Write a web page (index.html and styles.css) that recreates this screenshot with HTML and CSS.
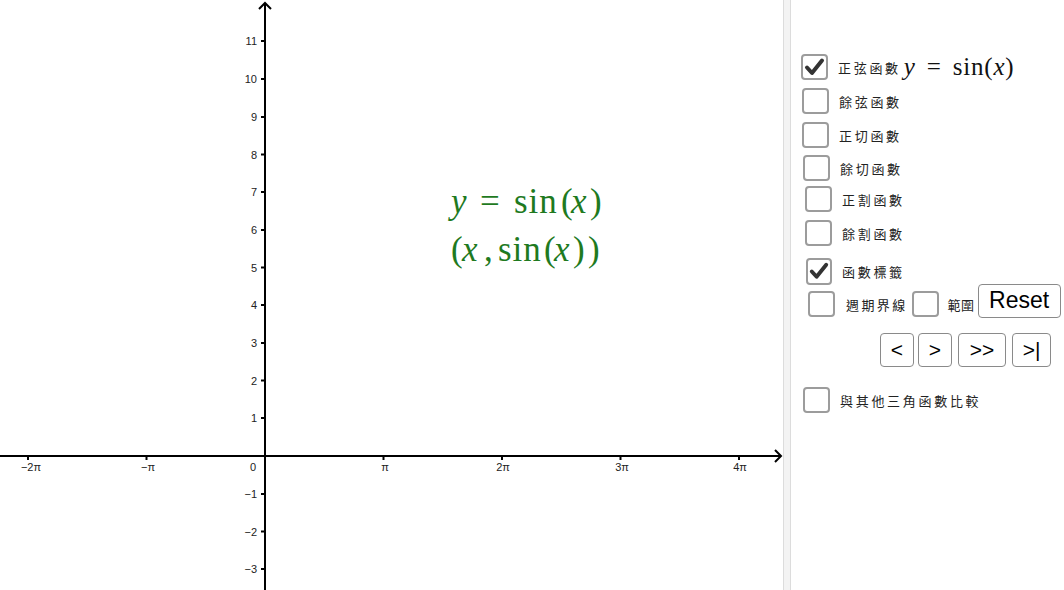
FILE: index.html
```html
<!DOCTYPE html>
<html lang="zh-Hant">
<head>
<meta charset="utf-8">
<title>三角函數</title>
<link rel="stylesheet" href="styles.css">
</head>
<body>
<div class="app">
  <div class="graphics">
    <svg class="plot" width="783" height="590" viewBox="0 0 783 590" xmlns="http://www.w3.org/2000/svg">
      <g class="axes" stroke="#000" stroke-width="2" fill="none">
        <line x1="0" y1="456" x2="780" y2="456"/>
        <polyline points="775,450 781,456 775,462"/>
        <line x1="265" y1="590" x2="265" y2="3"/>
        <polyline points="259,9 265,3 271,9"/>
      </g>
      <g class="ticks" stroke="#000" stroke-width="2">
        <line x1="28" y1="456" x2="28" y2="460"/>
        <line x1="146.5" y1="456" x2="146.5" y2="460"/>
        <line x1="383.5" y1="456" x2="383.5" y2="460"/>
        <line x1="502" y1="456" x2="502" y2="460"/>
        <line x1="620.5" y1="456" x2="620.5" y2="460"/>
        <line x1="739" y1="456" x2="739" y2="460"/>
        <line x1="261" y1="41" x2="265" y2="41"/>
        <line x1="261" y1="79" x2="265" y2="79"/>
        <line x1="261" y1="117" x2="265" y2="117"/>
        <line x1="261" y1="154.5" x2="265" y2="154.5"/>
        <line x1="261" y1="192" x2="265" y2="192"/>
        <line x1="261" y1="230" x2="265" y2="230"/>
        <line x1="261" y1="267.5" x2="265" y2="267.5"/>
        <line x1="261" y1="305" x2="265" y2="305"/>
        <line x1="261" y1="343" x2="265" y2="343"/>
        <line x1="261" y1="380.5" x2="265" y2="380.5"/>
        <line x1="261" y1="418" x2="265" y2="418"/>
        <line x1="261" y1="494" x2="265" y2="494"/>
        <line x1="261" y1="531.5" x2="265" y2="531.5"/>
        <line x1="261" y1="569" x2="265" y2="569"/>
      </g>
      <g class="tick-labels xl" text-anchor="middle">
        <text x="31" y="471">−2π</text>
        <text x="148" y="471">−π</text>
        <text x="253" y="471">0</text>
        <text x="385" y="471">π</text>
        <text x="503" y="471">2π</text>
        <text x="622" y="471">3π</text>
        <text x="740" y="471">4π</text>
      </g>
      <g class="tick-labels yl" text-anchor="end">
        <text x="257" y="45">11</text>
        <text x="257" y="83">10</text>
        <text x="257" y="121">9</text>
        <text x="257" y="158.5">8</text>
        <text x="257" y="196">7</text>
        <text x="257" y="234">6</text>
        <text x="257" y="271.5">5</text>
        <text x="257" y="309">4</text>
        <text x="257" y="347">3</text>
        <text x="257" y="384.5">2</text>
        <text x="257" y="422">1</text>
        <text x="257" y="498">−1</text>
        <text x="257" y="535.5">−2</text>
        <text x="257" y="573">−3</text>
      </g>
      <g class="math-label">
        <text y="213"><tspan class="it" x="451">y</tspan><tspan x="480">=</tspan><tspan x="514" class="fn">sin</tspan><tspan x="561">(</tspan><tspan class="it" x="571">x</tspan><tspan x="590">)</tspan></text>
        <text y="261"><tspan x="451">(</tspan><tspan class="it" x="462">x</tspan><tspan x="484">,</tspan><tspan x="498" class="fn">sin</tspan><tspan x="544">(</tspan><tspan class="it" x="554">x</tspan><tspan x="573">)</tspan><tspan x="588">)</tspan></text>
      </g>
    </svg>
  </div>
  <div class="divider"></div>
  <div class="panel">
    <div class="row r1">
      <span class="cb checked"><svg viewBox="0 0 27 26" width="27" height="26"><path d="M6 13.5 L11 19 L21 6.5" fill="none" stroke="#333" stroke-width="4" stroke-linecap="round" stroke-linejoin="round"/></svg></span>
      <span class="lbl">正弦函數</span>
      <span class="pmath"><i>y</i> = sin(<i>x</i>)</span>
    </div>
    <div class="row r2"><span class="cb"></span><span class="lbl">餘弦函數</span></div>
    <div class="row r3"><span class="cb"></span><span class="lbl">正切函數</span></div>
    <div class="row r4"><span class="cb"></span><span class="lbl">餘切函數</span></div>
    <div class="row r5"><span class="cb"></span><span class="lbl">正割函數</span></div>
    <div class="row r6"><span class="cb"></span><span class="lbl">餘割函數</span></div>
    <div class="row r7">
      <span class="cb checked"><svg viewBox="0 0 27 26" width="26" height="26"><path d="M6 13.5 L11 19 L21 6.5" fill="none" stroke="#333" stroke-width="4" stroke-linecap="round" stroke-linejoin="round"/></svg></span>
      <span class="lbl">函數標籤</span>
    </div>
    <div class="row r8">
      <span class="cb"></span><span class="lbl">週期界線</span>
      <span class="cb cb-inline"></span><span class="lbl lbl-short">範圍</span>
      <button class="btn reset">Reset</button>
    </div>
    <div class="btnrow">
      <button class="btn nav">&lt;</button>
      <button class="btn nav">&gt;</button>
      <button class="btn nav wide">&gt;&gt;</button>
      <button class="btn nav mid">&gt;|</button>
    </div>
    <div class="row r10"><span class="cb"></span><span class="lbl">與其他三角函數比較</span></div>
  </div>
</div>
</body>
</html>
```

FILE: styles.css
```css
html, body {
  margin: 0;
  padding: 0;
  background: #fff;
  overflow: hidden;
}
.app {
  display: flex;
  width: 1064px;
  height: 590px;
}
.graphics {
  width: 783px;
  height: 590px;
  flex: none;
}
.plot {
  display: block;
}
.tick-labels {
  font-family: "Liberation Sans", Arial, sans-serif;
  font-size: 11px;
  fill: #222;
}
.math-label {
  font-family: "Liberation Serif", "DejaVu Serif", serif;
  font-size: 35px;
  fill: #1f7a1f;
}
.math-label .it {
  font-style: italic;
}
.math-label .fn {
  letter-spacing: 1px;
}
.divider {
  flex: none;
  width: 6px;
  background: #f3f3f3;
  border-left: 1px solid #dcdcdc;
  border-right: 1px solid #dcdcdc;
}
.panel {
  flex: 1;
  display: flex;
  flex-direction: column;
  padding-top: 54px;
}
.row {
  display: flex;
  align-items: center;
  height: 26px;
}
.cb {
  flex: none;
  box-sizing: border-box;
  width: 27px;
  height: 26px;
  border: 2px solid #9c9c9c;
  border-radius: 4px;
  background: #fff;
  display: flex;
  align-items: center;
  justify-content: center;
  position: relative;
}
.cb svg {
  position: absolute;
  left: -2px;
  top: -2px;
}
.lbl {
  margin-left: 10px;
  font-family: "Noto Sans CJK TC", "Noto Sans CJK SC", sans-serif;
  font-size: 13px;
  letter-spacing: 2.7px;
  color: #222;
}
.pmath {
  margin-left: 3px;
  font-family: "Liberation Serif", "DejaVu Serif", serif;
  font-size: 25px;
  color: #111;
  word-spacing: 4px;
  letter-spacing: 0.8px;
}
.r1 { margin-left: 10px; }
.r2 { margin-left: 11px; margin-top: 8px; }
.r3 { margin-left: 11px; margin-top: 8px; }
.r4 { margin-left: 12px; margin-top: 7px; }
.r5 { margin-left: 14px; margin-top: 5px; }
.r6 { margin-left: 14px; margin-top: 8px; }
.r7 { margin-left: 15px; margin-top: 12px; }
.r7 .cb { width: 26px; height: 27px; }
.r8 { margin-left: 17px; margin-top: 7px; }
.r8 .lbl { margin-left: 11px; letter-spacing: 2.4px; }
.r8 .cb-inline { margin-left: 4px; }
.r8 .lbl-short { margin-left: 9px; letter-spacing: 0.5px; }
.btn {
  box-sizing: border-box;
  background: #fff;
  border: 1.5px solid #8a8a8a;
  border-radius: 4px;
  font-family: "Liberation Sans", Arial, sans-serif;
  color: #000;
  padding: 0;
  cursor: pointer;
}
.reset {
  width: 83px;
  height: 34px;
  margin-left: 3px;
  margin-top: -7px;
  font-size: 23px;
}
.btnrow {
  display: flex;
  margin-left: 89px;
  margin-top: 16px;
  gap: 4px;
}
.nav {
  width: 34px;
  height: 34px;
  font-size: 21px;
}
.nav.wide { width: 48px; margin-left: 2px; }
.nav.mid { width: 39px; margin-left: 2px; }
.r10 { margin-left: 12px; margin-top: 20px; }
```
